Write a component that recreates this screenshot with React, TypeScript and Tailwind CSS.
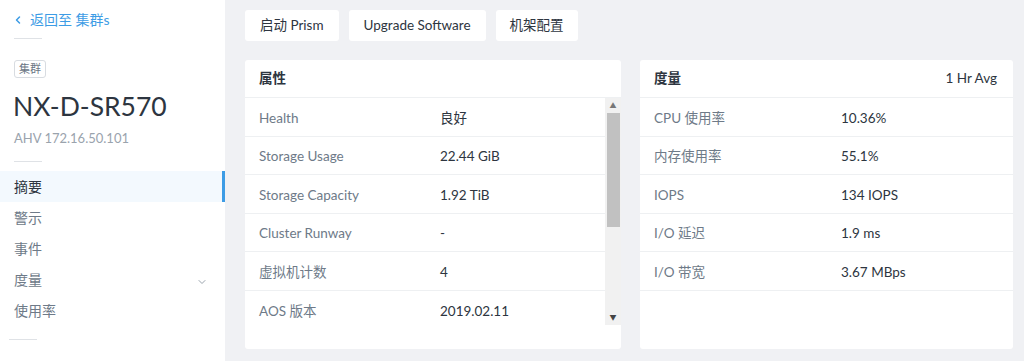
import { ChevronLeft, ChevronDown } from 'lucide-react';

const font = { fontFamily: 'Lato, "Noto Sans CJK SC", sans-serif' };

const props = [
  ['Health', '良好'],
  ['Storage Usage', '22.44 GiB'],
  ['Storage Capacity', '1.92 TiB'],
  ['Cluster Runway', '-'],
  ['虚拟机计数', '4'],
  ['AOS 版本', '2019.02.11'],
];

const metrics = [
  ['CPU 使用率', '10.36%'],
  ['内存使用率', '55.1%'],
  ['IOPS', '134 IOPS'],
  ['I/O 延迟', '1.9 ms'],
  ['I/O 带宽', '3.67 MBps'],
];

export default function App() {
  return (
    <div className="flex h-[361px] w-[1024px] overflow-hidden bg-[#f0f1f4] text-[13.5px]" style={font}>
      {/* sidebar */}
      <aside className="flex w-[225px] shrink-0 flex-col bg-white">
        <div className="flex h-[38px] items-center gap-[6px] px-[12px] pt-[1px] text-[14px] text-[#3d9ce5]">
          <ChevronLeft size={12} strokeWidth={3} />
          <span>返回至 集群s</span>
        </div>
        <div className="mx-[14px] h-px w-[28px] bg-[#dfe2e6]" />
        <div className="px-[14px] pt-[19px]">
          <span className="inline-block rounded-[3px] border border-[#d8dce1] px-[4px] py-[1px] text-[11px] leading-[14px] text-[#6a7584]">
            集群
          </span>
        </div>
        <div className="px-[13px] pt-[12px] text-[26.5px] leading-[32px] text-[#2d3540]">NX-D-SR570</div>
        <div className="px-[14px] pt-[7px] text-[13px] leading-[18px] text-[#9aa3ad]">AHV 172.16.50.101</div>
        <div className="mx-[14px] mt-[14px] h-px w-[28px] bg-[#dfe2e6]" />
        <nav className="mt-[9px] flex flex-col text-[14px]">
          <div className="flex h-[31px] items-center border-r-[3px] border-[#3d9ce5] bg-[#f3f9fe] px-[14px] text-[#2d3540]">摘要</div>
          <div className="flex h-[31px] items-center px-[14px] text-[#6e7a88]">警示</div>
          <div className="flex h-[31px] items-center px-[14px] text-[#6e7a88]">事件</div>
          <div className="flex h-[31px] items-center justify-between px-[14px] text-[#6e7a88]">
            <span>度量</span>
            <ChevronDown size={12} className="mr-[3px] mt-[4px] text-[#9aa3ad]" />
          </div>
          <div className="flex h-[31px] items-center px-[14px] text-[#6e7a88]">使用率</div>
        </nav>
        <div className="mx-[9px] mt-[13px] h-px w-[28px] bg-[#dfe2e6]" />
      </aside>

      {/* main */}
      <main className="flex flex-1 flex-col px-[20px] pt-[10px]">
        <div className="flex gap-[9px] text-[13.5px] text-[#2d3540]">
          <button className="h-[31px] rounded-[3px] bg-white px-[15px]">启动 Prism</button>
          <button className="ml-px h-[31px] rounded-[3px] bg-white px-[15px]">Upgrade Software</button>
          <button className="ml-px h-[31px] rounded-[3px] bg-white px-[14px]">机架配置</button>
        </div>

        <div className="mt-[19px] flex gap-[19px]">
          {/* properties */}
          <section className="h-[289px] w-[376px] rounded-[3px] bg-white">
            <div className="flex h-[38px] items-center border-b border-[#eef0f2] px-[14px] font-bold text-[#2d3540]">属性</div>
            <div className="flex">
              <div className="flex-1">
                {props.map(([k, v]) => (
                  <div key={k} className="flex h-[38.6px] items-center border-b border-[#eef0f2] px-[14px] pt-[2px] last:border-b-0">
                    <span className="w-[181px] text-[#6e7a88]">{k}</span>
                    <span className="text-[#2d3540]">{v}</span>
                  </div>
                ))}
              </div>
              <div className="flex h-[227px] w-[16px] flex-col items-center bg-[#f1f1f1]">
                <div className="flex h-[15px] items-center text-[7px] leading-none text-[#777]">▲</div>
                <div className="h-[114px] w-[13px] bg-[#c1c1c1]" />
                <div className="flex-1" />
                <div className="flex h-[16px] items-center text-[7px] leading-none text-[#444]">▼</div>
              </div>
            </div>
          </section>

          {/* metrics */}
          <section className="h-[289px] w-[373px] rounded-[3px] bg-white">
            <div className="flex h-[38px] items-center justify-between border-b border-[#eef0f2] px-[14px] text-[#2d3540]">
              <span className="font-bold">度量</span>
              <span className="mr-[2px]">1 Hr Avg</span>
            </div>
            {metrics.map(([k, v]) => (
              <div key={k} className="flex h-[38.6px] items-center border-b border-[#eef0f2] px-[14px] pt-[2px]">
                <span className="w-[187px] text-[#6e7a88]">{k}</span>
                <span className="text-[#2d3540]">{v}</span>
              </div>
            ))}
          </section>
        </div>
      </main>
    </div>
  );
}
